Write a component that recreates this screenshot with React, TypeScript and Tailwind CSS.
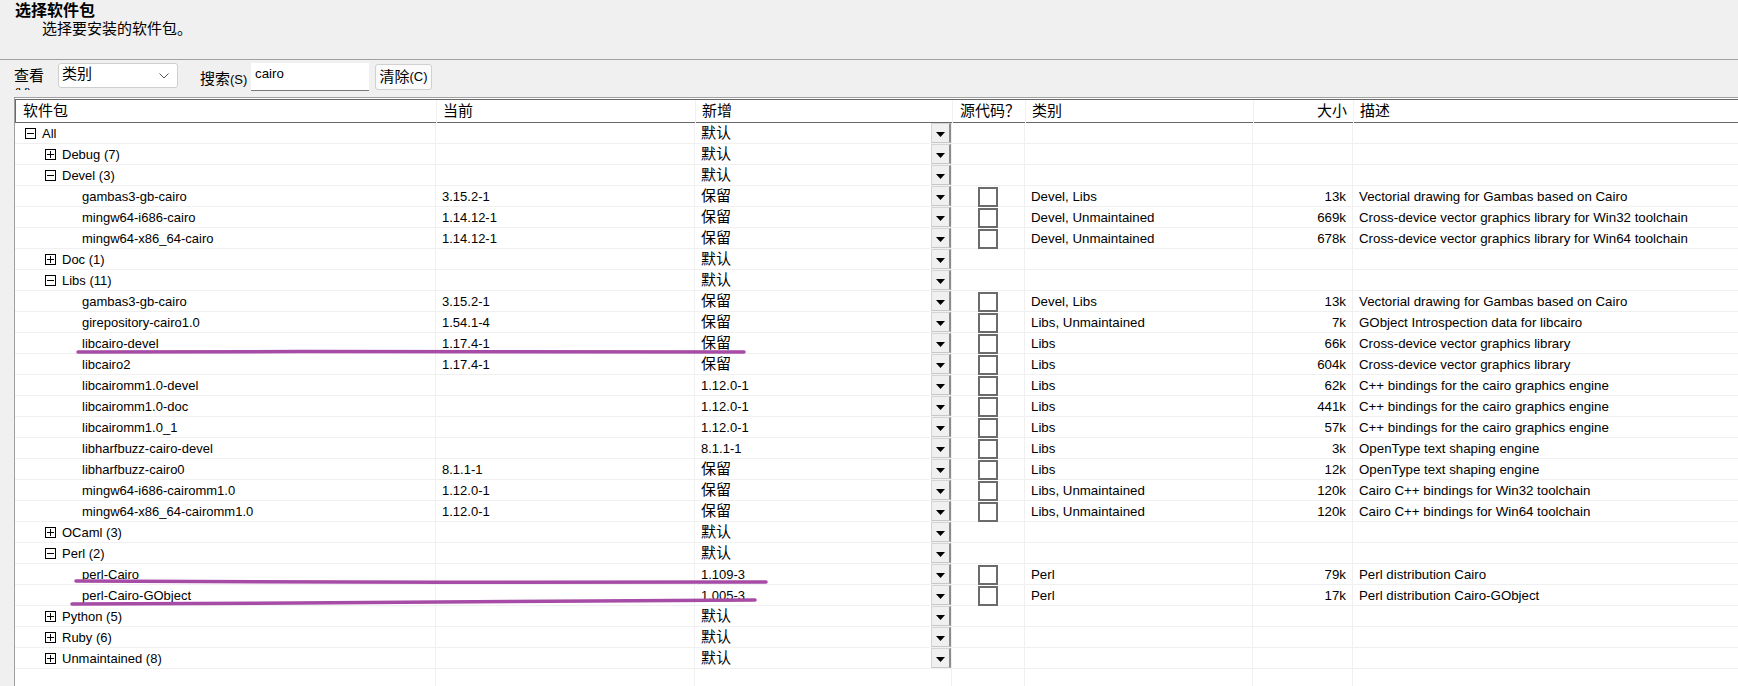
import React from 'react';

type Row = {
  level: 0 | 1 | 2;
  name: string;
  open?: boolean;
  current?: string;
  action: string;
  category?: string;
  size?: string;
  desc?: string;
};

const rows: Row[] = [
  { level: 0, name: 'All', open: true, action: '默认' },
  { level: 1, name: 'Debug (7)', open: false, action: '默认' },
  { level: 1, name: 'Devel (3)', open: true, action: '默认' },
  { level: 2, name: 'gambas3-gb-cairo', current: '3.15.2-1', action: '保留', category: 'Devel, Libs', size: '13k', desc: 'Vectorial drawing for Gambas based on Cairo' },
  { level: 2, name: 'mingw64-i686-cairo', current: '1.14.12-1', action: '保留', category: 'Devel, Unmaintained', size: '669k', desc: 'Cross-device vector graphics library for Win32 toolchain' },
  { level: 2, name: 'mingw64-x86_64-cairo', current: '1.14.12-1', action: '保留', category: 'Devel, Unmaintained', size: '678k', desc: 'Cross-device vector graphics library for Win64 toolchain' },
  { level: 1, name: 'Doc (1)', open: false, action: '默认' },
  { level: 1, name: 'Libs (11)', open: true, action: '默认' },
  { level: 2, name: 'gambas3-gb-cairo', current: '3.15.2-1', action: '保留', category: 'Devel, Libs', size: '13k', desc: 'Vectorial drawing for Gambas based on Cairo' },
  { level: 2, name: 'girepository-cairo1.0', current: '1.54.1-4', action: '保留', category: 'Libs, Unmaintained', size: '7k', desc: 'GObject Introspection data for libcairo' },
  { level: 2, name: 'libcairo-devel', current: '1.17.4-1', action: '保留', category: 'Libs', size: '66k', desc: 'Cross-device vector graphics library' },
  { level: 2, name: 'libcairo2', current: '1.17.4-1', action: '保留', category: 'Libs', size: '604k', desc: 'Cross-device vector graphics library' },
  { level: 2, name: 'libcairomm1.0-devel', action: '1.12.0-1', category: 'Libs', size: '62k', desc: 'C++ bindings for the cairo graphics engine' },
  { level: 2, name: 'libcairomm1.0-doc', action: '1.12.0-1', category: 'Libs', size: '441k', desc: 'C++ bindings for the cairo graphics engine' },
  { level: 2, name: 'libcairomm1.0_1', action: '1.12.0-1', category: 'Libs', size: '57k', desc: 'C++ bindings for the cairo graphics engine' },
  { level: 2, name: 'libharfbuzz-cairo-devel', action: '8.1.1-1', category: 'Libs', size: '3k', desc: 'OpenType text shaping engine' },
  { level: 2, name: 'libharfbuzz-cairo0', current: '8.1.1-1', action: '保留', category: 'Libs', size: '12k', desc: 'OpenType text shaping engine' },
  { level: 2, name: 'mingw64-i686-cairomm1.0', current: '1.12.0-1', action: '保留', category: 'Libs, Unmaintained', size: '120k', desc: 'Cairo C++ bindings for Win32 toolchain' },
  { level: 2, name: 'mingw64-x86_64-cairomm1.0', current: '1.12.0-1', action: '保留', category: 'Libs, Unmaintained', size: '120k', desc: 'Cairo C++ bindings for Win64 toolchain' },
  { level: 1, name: 'OCaml (3)', open: false, action: '默认' },
  { level: 1, name: 'Perl (2)', open: true, action: '默认' },
  { level: 2, name: 'perl-Cairo', action: '1.109-3', category: 'Perl', size: '79k', desc: 'Perl distribution Cairo' },
  { level: 2, name: 'perl-Cairo-GObject', action: '1.005-3', category: 'Perl', size: '17k', desc: 'Perl distribution Cairo-GObject' },
  { level: 1, name: 'Python (5)', open: false, action: '默认' },
  { level: 1, name: 'Ruby (6)', open: false, action: '默认' },
  { level: 1, name: 'Unmaintained (8)', open: false, action: '默认' },
];

const cols = 'grid grid-cols-[421px_259px_257px_73px_228px_100px_1fr]';
const cell = 'border-r border-[#f0f0f0] flex items-center min-w-0';

function TreeBox({ open }: { open?: boolean }) {
  return (
    <svg width="11" height="11" viewBox="0 0 11 11" className="shrink-0">
      <rect x="0.5" y="0.5" width="10" height="10" fill="none" stroke="#000" />
      <path d="M2 5.5h7" stroke="#000" />
      {!open && <path d="M5.5 2v7" stroke="#000" />}
    </svg>
  );
}

function DropButton() {
  return (
    <div className="w-[20px] h-[20px] mb-[1px] shrink-0 bg-[#f0f0f0] border-l border-t border-l-[#d4d4d4] border-t-[#d4d4d4] border-r-2 border-r-[#8c8c8c] border-b border-b-[#c8c8c8] flex items-center justify-center pt-[2px]">
      <svg width="9" height="5" viewBox="0 0 9 5">
        <path d="M0 0h9L4.5 5z" fill="#000" />
      </svg>
    </div>
  );
}

function TableRow({ row }: { row: Row }) {
  const isPackage = row.level === 2;
  const indent = row.level === 0 ? 'pl-[10px]' : row.level === 1 ? 'pl-[30px]' : 'pl-[67px]';
  const isCjk = /[^\x00-\x7f]/.test(row.action);
  return (
    <div className={`${cols} h-[21px] border-b border-[#f0f0f0]`}>
      <div className={`${cell} ${indent} gap-[6px] text-[13px]`}>
        {!isPackage && <TreeBox open={row.open} />}
        <span className="whitespace-nowrap">{row.name}</span>
      </div>
      <div className={`${cell} pl-[6px] text-[13px]`}>{row.current}</div>
      <div className={`${cell} pl-[6px] justify-between`}>
        <span className={isCjk ? 'text-[15px] -mt-[1px]' : 'text-[13px]'}>{row.action}</span>
        <DropButton />
      </div>
      <div className={`${cell} justify-center pr-[1px]`}>
        {row.category && <div className="w-[20px] h-[20px] border-2 border-[#6b6b6b] bg-white" />}
      </div>
      <div className={`${cell} pl-[6px]`}>{row.category}</div>
      <div className={`${cell} justify-end pr-[6px]`}>{row.size}</div>
      <div className="flex items-center pl-[6px]">{row.desc}</div>
    </div>
  );
}

export default function App() {
  return (
    <div
      className="w-[1738px] h-[686px] overflow-hidden bg-[#f0f0f0] text-[13.3px] text-black flex flex-col relative"
      style={{ fontFamily: '"Liberation Sans", "Noto Sans CJK SC", sans-serif' }}
    >
      {/* Page heading */}
      <div className="h-[60px] shrink-0 border-b border-[#a0a0a0] pl-[15px] pt-[1px]">
        <div className="text-[16px] font-bold leading-[19px]">选择软件包</div>
        <div className="text-[15px] leading-[18px] pl-[27px]">选择要安装的软件包。</div>
      </div>

      {/* Toolbar */}
      <div className="h-[37px] shrink-0 flex items-start pt-[3px] pl-[14px]">
        <div className="w-[44px] h-[27px] overflow-hidden pt-[3px] text-[15px] leading-[20px]">
          查看
          <div className="text-[13px] leading-[14px]">(V)</div>
        </div>
        <div className="w-[120px] h-[25px] bg-white border border-[#cfcfcf] rounded-[3px] flex items-center justify-between pl-[3px] pr-[8px] text-[15px]">
          <span className="-mt-[3px]">类别</span>
          <svg width="10" height="6" viewBox="0 0 10 6">
            <path d="M0.5 0.5L5 5l4.5-4.5" fill="none" stroke="#555" />
          </svg>
        </div>
        <div className="ml-[22px] w-[51px] pt-[6px] text-[15px] leading-[20px] whitespace-nowrap">
          搜索<span className="text-[13px]">(S)</span>
        </div>
        <div className="w-[118px] h-[28px] bg-white border-b border-[#7a7a7a] pl-[4px] leading-[20px] text-[13.3px] pt-[1px]">cairo</div>
        <div className="ml-[6px] w-[57px] h-[26px] mt-[1px] bg-[#fbfbfb] border border-[#d0d0d0] rounded-[3px] flex items-center justify-center text-[15px]">
          清除<span className="text-[13px]">(C)</span>
        </div>
      </div>

      {/* Package table */}
      <div className="flex-1 ml-[14px] border-l border-t border-[#a0a0a0] bg-white pt-[1px] flex flex-col min-h-0">
        <div className={`${cols} h-[24px] shrink-0 border border-r-0 border-[#696969] text-[15px]`}>
          <div className={`${cell} pl-[7px]`}>软件包</div>
          <div className={`${cell} pl-[6px]`}>当前</div>
          <div className={`${cell} pl-[6px]`}>新增</div>
          <div className={`${cell} pl-[7px] whitespace-nowrap`}>源代码？</div>
          <div className={`${cell} pl-[6px]`}>类别</div>
          <div className={`${cell} justify-end pr-[6px]`}>大小</div>
          <div className="flex items-center pl-[6px]">描述</div>
        </div>
        <div>
          {rows.map((row, i) => (
            <TableRow key={i} row={row} />
          ))}
        </div>
        <div className={`${cols} flex-1`}>
          <div className={cell} />
          <div className={cell} />
          <div className={cell} />
          <div className={cell} />
          <div className={cell} />
          <div className={cell} />
          <div />
        </div>
      </div>

      {/* Hand-drawn highlight strokes */}
      <svg className="absolute inset-0 pointer-events-none" width="1738" height="686">
        <g fill="none" stroke="#a64ca6" strokeWidth="3.5" strokeLinecap="round">
          <path d="M78 352C300 351 520 352 744 352" />
          <path d="M76 581C300 582 540 583 766 582" />
          <path d="M72 604C300 603 540 602 755 600" />
        </g>
      </svg>
    </div>
  );
}
